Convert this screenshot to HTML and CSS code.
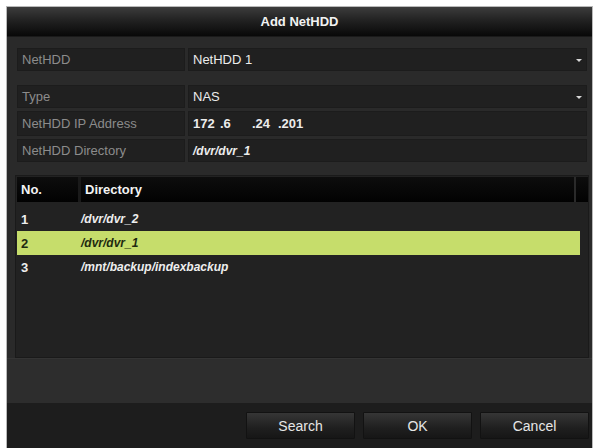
FILE: index.html
```html
<!DOCTYPE html>
<html>
<head>
<meta charset="utf-8">
<link rel="stylesheet" href="styles.css">
</head>
<body>
<div class="dialog">
  <div class="title">Add NetHDD</div>
  <div class="form">
    <div class="row first">
      <div class="label">NetHDD</div>
      <div class="value select">NetHDD 1<span class="caret"></span></div>
    </div>
    <div class="row">
      <div class="label">Type</div>
      <div class="value select">NAS<span class="caret"></span></div>
    </div>
    <div class="row tall">
      <div class="label">NetHDD IP Address</div>
      <div class="value ip"><span class="oct">172</span><span class="oct">.6</span><span class="oct">.24</span><span class="oct">.201</span></div>
    </div>
    <div class="row">
      <div class="label">NetHDD Directory</div>
      <div class="value dir">/dvr/dvr_1</div>
    </div>
  </div>
  <div class="table">
    <div class="thead">
      <div class="c1">No.</div>
      <div class="c2">Directory</div>
      <div class="c3"></div>
    </div>
    <div class="tr"><div class="c1">1</div><div class="c2">/dvr/dvr_2</div></div>
    <div class="tr sel"><div class="c1">2</div><div class="c2">/dvr/dvr_1</div></div>
    <div class="tr"><div class="c1">3</div><div class="c2">/mnt/backup/indexbackup</div></div>
  </div>
  <div class="band"></div>
  <div class="footer">
    <button class="btn">Search</button>
    <button class="btn">OK</button>
    <button class="btn">Cancel</button>
  </div>
</div>
</body>
</html>
```
FILE: styles.css
```css
html, body {
  margin: 0;
  padding: 0;
  background: #ffffff;
  font-family: "Liberation Sans", Arial, sans-serif;
}
body {
  width: 598px;
  height: 448px;
  overflow: hidden;
}
.dialog {
  margin: 6px 5px 0 6px;
  border: 1px solid #b9b9b9;
  border-bottom: none;
  background: #2a2a2a;
  height: 441px;
  display: flex;
  flex-direction: column;
}
.title {
  height: 29px;
  line-height: 29px;
  text-align: center;
  color: #f2f2f2;
  font-size: 13px;
  font-weight: bold;
  background: linear-gradient(#3c3c3c 0%, #222 45%, #080808 100%);
  border-bottom: 1px solid #1a1a1a;
}
.form {
  padding: 11px 5px 0 10px;
  display: flex;
  flex-direction: column;
  gap: 3px;
}
.row {
  display: grid;
  grid-template-columns: 168px 1fr;
  gap: 3px;
  height: 23px;
}
.row.first {
  margin-bottom: 11px;
}
.row.tall {
  height: 25px;
}
.label, .value {
  background: #202020;
  border: 1px solid #1c1c1c;
  display: flex;
  align-items: center;
  font-size: 13px;
}
.label {
  color: #8c8c8c;
  padding-left: 4px;
}
.value {
  color: #ececec;
  padding-left: 4px;
  position: relative;
}
.value.dir {
  font-style: italic;
  font-weight: bold;
  font-size: 12px;
}
.caret {
  position: absolute;
  right: 4px;
  top: 10px;
  width: 0;
  height: 0;
  border-left: 3px solid transparent;
  border-right: 3px solid transparent;
  border-top: 3px solid #d8d8d8;
}
.ip .oct:nth-child(1) { width: 27px; }
.ip .oct:nth-child(2) { width: 32px; }
.ip .oct:nth-child(3) { width: 26px; }
.oct {
  display: inline-block;
  font-weight: bold;
}
.table {
  margin: 13px 3px 0 8px;
  background: #222222;
  border: 1px solid #1a1a1a;
  height: 180px;
  padding: 1px 0 0 1px;
}
.thead {
  display: flex;
  height: 25px;
  background: linear-gradient(#0d0d0d, #020202);
  color: #f4f4f4;
  font-size: 13px;
  font-weight: bold;
  margin-bottom: 5px;
}
.thead > div {
  display: flex;
  align-items: center;
  padding-left: 4px;
}
.thead .c1 {
  width: 57px;
  border-right: 3px solid #1a1a1a;
}
.thead .c2 {
  flex: 1;
  border-right: 2px solid #2a2a2a;
}
.thead .c3 {
  width: 8px;
}
.tr {
  display: flex;
  height: 24px;
  align-items: center;
  color: #eeeeee;
  font-size: 13px;
  font-weight: bold;
  margin-right: 8px;
}
.tr .c1 {
  width: 60px;
  padding-left: 4px;
}
.tr .c2 {
  font-style: italic;
  font-size: 12px;
}
.tr.sel {
  background: #c6dd6b;
  color: #1e2a10;
}
.band {
  height: 44px;
  background: #2d2d2d;
  border-top: 1px solid #343434;
}
.footer {
  flex: 1;
  background: #1d1d1d;
  display: flex;
  justify-content: flex-end;
  align-items: flex-start;
  gap: 8px;
  padding: 9px 3px 0 0;
}
.btn {
  width: 109px;
  height: 27px;
  font-family: "Liberation Sans", Arial, sans-serif;
  font-size: 14px;
  color: #e6e6e6;
  background: linear-gradient(#363636, #1f1f1f 60%, #161616);
  border: 1px solid #121212;
  border-radius: 1px;
  padding: 0;
}
```
